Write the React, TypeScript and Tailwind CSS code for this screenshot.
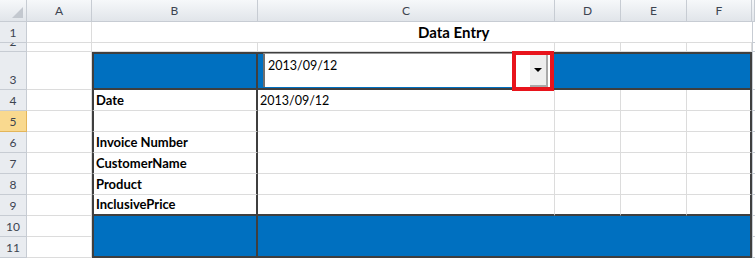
import React from 'react';

const font = { fontFamily: 'Lato, "Open Sans", "Liberation Sans", sans-serif' };

const hdr =
  'flex items-center justify-center bg-gradient-to-b from-[#f6f8fa] to-[#e1e5ea] border-r border-b border-[#c7ccd3] text-[12px] text-[#3c4450]';
const rowHdr =
  'flex items-end justify-center bg-[#e9ecf0] border-r border-b border-[#c7ccd3] text-[12px] text-[#3c4450] overflow-hidden leading-[18px]';
const cell = 'border-r border-b border-[#dcdcdc] bg-white';

const labels: Record<number, string> = {
  4: 'Date',
  6: 'Invoice Number',
  7: 'CustomerName',
  8: 'Product',
  9: 'InclusivePrice',
};

const App: React.FC = () => {
  const dataRows = [4, 5, 6, 7, 8, 9];

  return (
    <div className="w-[755px] h-[258px] bg-white overflow-hidden" style={font}>
      <div className="relative grid grid-cols-[27px_65px_166px_297px_66px_66px_65px_1fr] grid-rows-[22px_21px_9px_38px_21px_21px_21px_21px_21px_21px_21px_21px]">
        {/* column headers */}
        <div className={`${hdr} relative`}>
          <div className="absolute right-[3px] bottom-[3px] w-0 h-0 border-l-[11px] border-l-transparent border-b-[11px] border-b-[#c3c8cf]" />
        </div>
        <div className={hdr}>A</div>
        <div className={hdr}>B</div>
        <div className={hdr}>C</div>
        <div className={hdr}>D</div>
        <div className={hdr}>E</div>
        <div className={hdr}>F</div>
        <div className={hdr} />

        {/* row 1 */}
        <div className={rowHdr}>1</div>
        <div className={cell} />
        <div className="col-span-5 border-b border-[#dcdcdc] bg-white flex items-end pl-[326px] pb-[2px] text-[15px] font-bold text-black leading-none">
          Data Entry
        </div>
        <div className="border-l border-b border-[#c7ccd3] bg-white" />

        {/* row 2 */}
        <div className={rowHdr}>2</div>
        <div className={cell} />
        <div className={cell} />
        <div className={cell} />
        <div className={cell} />
        <div className={cell} />
        <div className={cell} />
        <div className="border-l border-b border-[#c7ccd3] bg-white" />

        {/* row 3 */}
        <div className={rowHdr}>3</div>
        <div className={cell} />
        <div className="bg-[#0070c0] border-2 border-[#3f3f3f]" />
        <div className="col-span-4 bg-[#0070c0] border-y-2 border-r-2 border-[#3f3f3f]" />
        <div className="border-l border-b border-[#c7ccd3] bg-white" />

        {/* rows 4-9 */}
        {dataRows.map((r) => (
          <React.Fragment key={r}>
            <div
              className={
                r === 5
                  ? 'flex items-end justify-center bg-[#f9d98f] border-r border-b border-[#e3b55a] text-[12px] text-[#3c4450] leading-[18px]'
                  : rowHdr
              }
            >
              {r}
            </div>
            <div className={cell} />
            <div
              className={`bg-white border-l-2 border-r-2 border-[#3f3f3f] flex items-end pl-[2px] text-[13px] font-bold text-black leading-[19px] ${
                r === 9 ? 'border-b-2' : 'border-b border-b-[#dcdcdc]'
              }`}
            >
              {labels[r] ?? ''}
            </div>
            <div
              className={`bg-white border-r border-r-[#dcdcdc] flex items-end pl-[2px] text-[12.5px] text-black leading-[19px] ${
                r === 9 ? 'border-b-2 border-b-[#3f3f3f]' : 'border-b border-b-[#dcdcdc]'
              }`}
            >
              {r === 4 ? '2013/09/12' : ''}
            </div>
            <div
              className={`bg-white border-r border-r-[#dcdcdc] ${
                r === 9 ? 'border-b-2 border-b-[#3f3f3f]' : 'border-b border-b-[#dcdcdc]'
              }`}
            />
            <div
              className={`bg-white border-r border-r-[#dcdcdc] ${
                r === 9 ? 'border-b-2 border-b-[#3f3f3f]' : 'border-b border-b-[#dcdcdc]'
              }`}
            />
            <div
              className={`bg-white border-r-2 border-r-[#3f3f3f] ${
                r === 9 ? 'border-b-2 border-b-[#3f3f3f]' : 'border-b border-b-[#dcdcdc]'
              }`}
            />
            <div className="border-l border-b border-[#c7ccd3] bg-white" />
          </React.Fragment>
        ))}

        {/* rows 10-11 */}
        <div className={rowHdr}>10</div>
        <div className={cell} />
        <div className="row-span-2 bg-[#0070c0] border-x-2 border-b-2 border-[#3f3f3f]" />
        <div className="row-span-2 col-span-4 bg-[#0070c0] border-r-2 border-b-2 border-[#3f3f3f]" />
        <div className="border-l border-b border-[#c7ccd3] bg-white" />
        <div className={rowHdr}>11</div>
        <div className={cell} />
        <div className="border-l border-b border-[#c7ccd3] bg-white" />

        {/* combo box over C3 */}
        <div className="absolute left-[263px] top-[53px] w-[290px] h-[34px] bg-white border-l-2 border-l-[#6e6e6e] border-t border-t-[#9a9a9a] flex">
          <div className="flex-1 pl-[3px] pt-[4px] text-[12.5px] text-black leading-[16px]">2013/09/12</div>
          <div className="w-[18px] h-full mr-[5px] bg-[#eeeeee] border-r-2 border-b-2 border-[#a9a9a9] flex items-center justify-center">
            <div className="w-0 h-0 border-l-[4px] border-r-[4px] border-t-[4px] border-l-transparent border-r-transparent border-t-black" />
          </div>
        </div>

        {/* red highlight */}
        <div className="absolute left-[512px] top-[51px] w-[42px] h-[40px] border-4 border-[#e8141c]" />
      </div>
    </div>
  );
};

export default App;
